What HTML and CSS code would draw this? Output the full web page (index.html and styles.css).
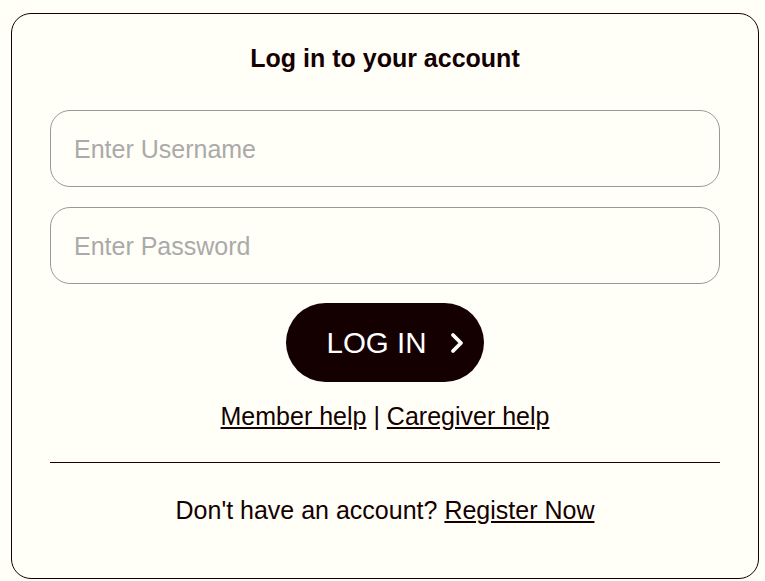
FILE: index.html
```html
<!DOCTYPE html>
<html>
<head>
<meta charset="utf-8">
<link rel="stylesheet" href="styles.css">
</head>
<body>
<div class="card">
  <h1 class="title">Log in to your account</h1>
  <form class="form">
    <input class="field" type="text" placeholder="Enter Username">
    <input class="field" type="password" placeholder="Enter Password">
    <button class="btn" type="button"><span>LOG IN</span>
      <svg class="chev" width="14" height="22" viewBox="0 0 14 22"><path d="M3 3 L11 11 L3 19" fill="none" stroke="#fff" stroke-width="3.8" stroke-linecap="round" stroke-linejoin="round"/></svg>
    </button>
  </form>
  <div class="help"><a href="#">Member help</a> | <a href="#">Caregiver help</a></div>
  <hr class="divider">
  <div class="register">Don't have an account? <a href="#">Register Now</a></div>
</div>
</body>
</html>
```
FILE: styles.css
```css
html, body {
  margin: 0;
  background: #fffff7;
  font-family: "Liberation Sans", Arial, sans-serif;
  color: #140000;
}
body {
  padding: 13px 6px 2px 11px;
}
.card {
  box-sizing: border-box;
  width: 748px;
  height: 566px;
  border: 1px solid #140000;
  border-radius: 20px;
  padding: 29px 38px 0 38px;
  display: flex;
  flex-direction: column;
}
.title {
  margin: 0;
  text-align: center;
  font-size: 25px;
  font-weight: bold;
  line-height: 30px;
}
.form {
  margin-top: 37px;
  display: flex;
  flex-direction: column;
  align-items: center;
  gap: 20px;
}
.field {
  box-sizing: border-box;
  width: 100%;
  height: 77px;
  border: 1px solid #999;
  border-radius: 20px;
  background: #fffff7;
  padding: 2px 23px 0;
  font-family: "Liberation Sans", Arial, sans-serif;
  font-size: 25px;
  color: #140000;
  outline: none;
}
.field::placeholder {
  color: #aaa;
}
.btn {
  margin-top: -1px;
  width: 198px;
  height: 79px;
  border: none;
  border-radius: 40px;
  background: #140000;
  color: #fff;
  font-family: "Liberation Sans", Arial, sans-serif;
  font-size: 29.5px;
  display: flex;
  align-items: center;
  justify-content: center;
  gap: 23px;
  padding: 0 0 0 20px;
}
.help {
  margin-top: 19px;
  text-align: center;
  font-size: 25px;
  line-height: 30px;
}
.help a, .register a {
  color: #140000;
}
.divider {
  margin: 31px 0 0 0;
  border: none;
  border-top: 1px solid #140000;
  height: 0;
}
.register {
  margin-top: 32px;
  text-align: center;
  font-size: 25px;
  line-height: 30px;
}
```
